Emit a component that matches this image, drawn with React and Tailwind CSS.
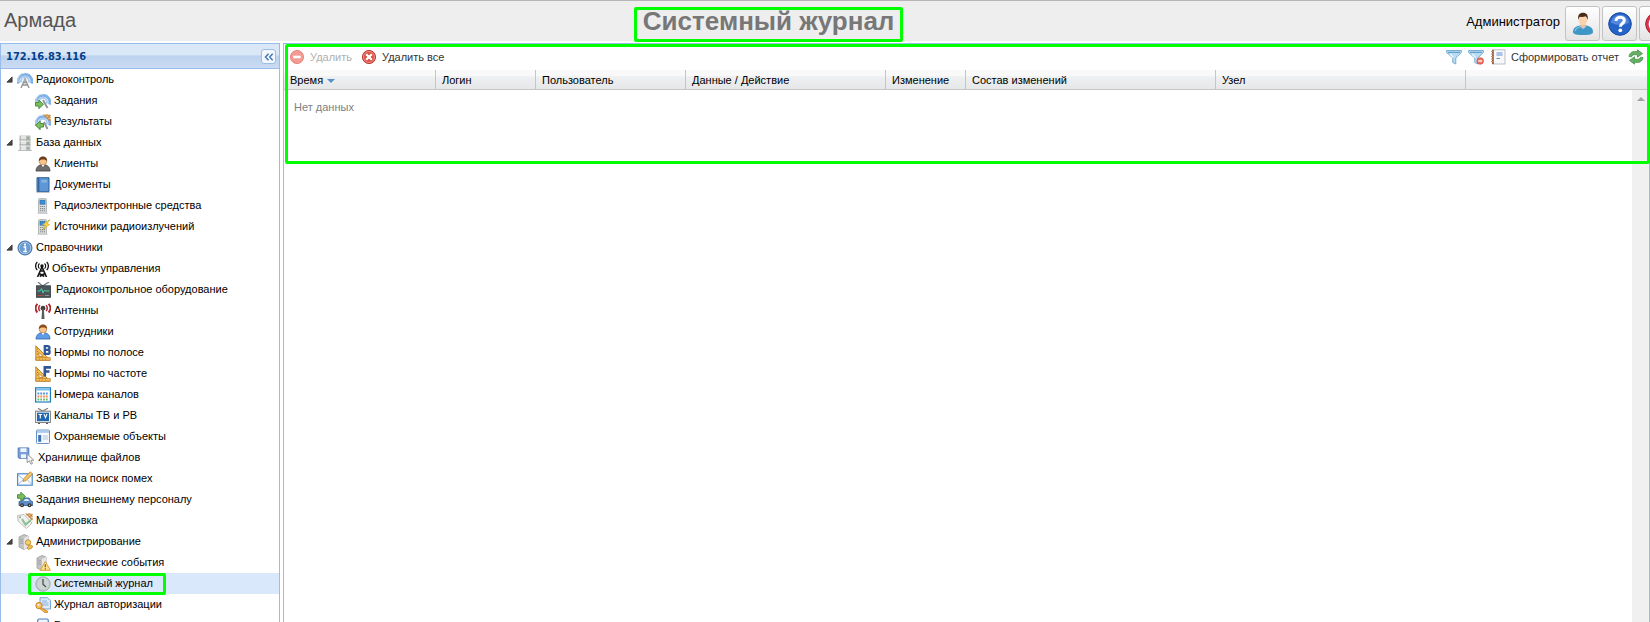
import React from "react";

const Svg = ({ children, className = "size-4" }) => (
  <svg viewBox="0 0 16 16" className={`${className} shrink-0`} aria-hidden="true">
    {children}
  </svg>
);

const Waves = () => (
  <g fill="none">
    <path d="M1.6 11.500A6.800 6.800 0 1 1 14.400 11.500" stroke="#7fb0e6" strokeWidth="2.800" />
    <path d="M4.600 10.500A3.900 3.900 0 1 1 11.400 10.500" stroke="#a9cbf0" strokeWidth="1.900" />
    <path d="M1 10A7.200 7.200 0 0 1 8 1" stroke="#cfe2f7" strokeWidth="1" />
  </g>
);

const ArrowRight = ({ y = 0, x = 0 }) => (
  <path transform={`translate(${x} ${y})`} d="M.5 9.500h3.300V7l4.700 4.300-4.700 4.400v-2.600H.5z" fill="#7dbd5c" stroke="#3f8a35" strokeWidth=".9" />
);

const Server = () => (
  <g>
    <path d="M2 3l5-2.500L11 2v11l-4 2.500L2 13z" fill="#c4c4c4" stroke="#9c9c9c" strokeWidth=".8" />
    <path d="M7 4l4-2v11l-4 2.500z" fill="#e6e6e6" />
    <path d="M3 5l3 .6M3 7l3 .6M3 9l3 .6" stroke="#999" strokeWidth=".8" />
  </g>
);

const Phone = () => (
  <g>
    <rect x="3.500" y=".6" width="8" height="14.600" rx="1" fill="#d9dbdc" stroke="#a3a8aa" strokeWidth=".8" />
    <rect x="5" y="2.200" width="5" height="4" fill="#3b8fd6" stroke="#2468a5" strokeWidth=".6" />
    <path d="M5 8.500h5M5 10.600h5M5 12.700h5" stroke="#84898c" strokeWidth="1.100" strokeDasharray="1.200 .7" />
    <path d="M2 15.500h11" stroke="#cfd1d2" strokeWidth=".8" />
  </g>
);

const SetSquare = ({ children }) => (
  <Svg>
    <path d="M.8.8v14.400h14.400z" fill="#f2bd5a" stroke="#b97a1c" strokeWidth=".9" />
    <path d="M1 12.500h14.300v2.700H1z" fill="#f2bd5a" stroke="#b97a1c" strokeWidth=".6" />
    <path d="M4 7.500v4h4z" fill="#fff" stroke="#b97a1c" strokeWidth=".8" />
    <path d="M2 4h1.200M2 6.500h1.200M2 9h1.200M4 14h.8M7 14h.8M10 14h.8" stroke="#8d5d12" strokeWidth=".7" />
    <g fill="none" stroke="#2f5796" strokeWidth="2.600">{children}</g>
  </Svg>
);

const Person = ({ hair, shirt, edge }) => (
  <Svg>
    <path d="M1 15c0-3.500 2-5.500 4.500-6h5c2.500.5 4.500 2.500 4.500 6z" fill={shirt} stroke={edge} strokeWidth=".8" />
    <circle cx="8" cy="5.400" r="3.700" fill="#f5c58c" stroke="#a96c35" strokeWidth=".6" />
    <path d="M3.900 5.500C3.500 2 5.500.4 8 .4s4.500 1.600 4.100 5.100C11.500 3.800 10 3.400 8 3.400S4.500 3.800 3.900 5.500z" fill={hair} />
    <path d="M6.500 9L8 11l1.500-2z" fill="#fff" />
  </Svg>
);

const Hatch = () => (
  <g>
    <path d="M8 .5h7.500V8z" fill="#efbd82" />
    <path d="M9 .5l6.500 6.500M12 .5l3.500 3.500M10 2.500l2-2M12 4.500l3.500-3.500M14 6.500l1.500-1.500" stroke="#a86a32" strokeWidth=".8" />
  </g>
);

const icons = {
  radio: (
    <Svg>
      <Waves />
      <path d="M4 16L8 7l4 9M5.500 13h5M6.500 10.500h3" fill="none" stroke="#8f9294" strokeWidth="1.300" />
      <circle cx="8" cy="7.500" r="1.400" fill="#aeb1b3" />
    </Svg>
  ),
  tasks: (
    <Svg>
      <Waves />
      <path d="M8 7l4.500 8" stroke="#8f9294" strokeWidth="1.800" />
      <ArrowRight />
    </Svg>
  ),
  results: (
    <Svg>
      <Waves />
      <Hatch />
      <path d="M9 8l3.500 7" stroke="#8f9294" strokeWidth="1.800" />
      <path d="M8.500 9.500H5.200V7L.5 11.300l4.700 4.400v-2.600h3.300z" fill="#7dbd5c" stroke="#3f8a35" strokeWidth=".9" />
    </Svg>
  ),
  database: (
    <Svg>
      <path d="M2.500.5h11v14.500h-11z" fill="#b9bcba" />
      <path d="M4 .5h5v14.500H4z" fill="#e4e6e4" />
      <path d="M2.500 5h11M2.500 10h11" stroke="#979b99" strokeWidth="1" />
      <path d="M2.500 6h11M2.500 11h11" stroke="#f2f3f2" strokeWidth=".8" />
      <path d="M10 2.800h2M10 8h2M10 13h2" stroke="#7ea878" strokeWidth="1.200" />
      <path d="M1 15.500h14" stroke="#b4b6b5" strokeWidth=".9" />
    </Svg>
  ),
  clients: <Person hair="#6b3a17" shirt="#6d6d6d" edge="#3f3f3f" />,
  documents: (
    <Svg>
      <path d="M2 .7h12v14H2z" fill="#5e97d3" stroke="#2c5f9c" strokeWidth="1" />
      <path d="M3.700 1v13.500" stroke="#2c5f9c" strokeWidth="1.200" />
      <path d="M6.500 3h5.500v2.500H6.500z" fill="#86b4e4" />
      <path d="M1.500 15.500h13" stroke="#b9b9b9" strokeWidth=".8" />
    </Svg>
  ),
  phone: (
    <Svg>
      <Phone />
    </Svg>
  ),
  source: (
    <Svg>
      <Phone />
      <path d="M15 .5L7.500 5.500l3 1L7.500 11 14.500 5.500l-2.500-1z" fill="#f8d84a" stroke="#c79d1b" strokeWidth=".6" />
    </Svg>
  ),
  info: (
    <Svg>
      <circle cx="8" cy="8" r="7" fill="#6c9bd2" stroke="#3a6aa5" strokeWidth="1" />
      <circle cx="8" cy="8" r="5.800" fill="none" stroke="#b4cfee" strokeWidth=".8" />
      <circle cx="8" cy="4.700" r="1.100" fill="#fff" />
      <path d="M6.500 7h2v4.200M6.300 11.500h3.600" stroke="#fff" strokeWidth="1.400" fill="none" />
    </Svg>
  ),
  tower: (
    <svg viewBox="0 0 14 16" className="h-4 w-[14px] shrink-0" aria-hidden="true">
      <g fill="none" stroke="#161616">
        <path d="M2.300 9A5.600 5.600 0 0 1 2.300 1M11.700 9a5.600 5.600 0 0 0 0-8" strokeWidth="1.300" />
        <path d="M4.500 7.500A3.200 3.200 0 0 1 4.500 2.500M9.500 7.500a3.200 3.200 0 0 0 0-5" strokeWidth="1.100" />
        <path d="M2.500 16L7 6l4.500 10M4.300 12.500l5 3M9.700 12.500l-5 3M5.500 10h3" strokeWidth="1.600" />
      </g>
      <circle cx="7" cy="5" r="1.700" fill="#161616" />
    </svg>
  ),
  equipment: (
    <Svg>
      <path d="M3 0l4.500 4L14 0" fill="none" stroke="#6c7a80" strokeWidth="1.200" />
      <rect x="1.500" y="3.800" width="14" height="11.500" fill="#4a555a" stroke="#30383b" strokeWidth=".8" />
      <path d="M2.500 9h2.500l1.500-2.500L8 11l1.500-3 1 1h4" fill="none" stroke="#4fd0a8" strokeWidth="1" />
      <path d="M3 13.500h6" stroke="#d34b3c" strokeWidth="1.200" strokeDasharray="1.300 1" />
      <path d="M10 13.500h4" stroke="#8b979c" strokeWidth="1" />
    </Svg>
  ),
  antenna: (
    <Svg>
      <g fill="none" stroke="#b2262f">
        <path d="M2.400 9.500A6.500 6.500 0 0 1 2.400.8M13.600 9.500a6.500 6.500 0 0 0 0-8.700" strokeWidth="2" />
        <path d="M5 8A3.800 3.800 0 0 1 5 2.300M11 8a3.800 3.800 0 0 0 0-5.700" strokeWidth="1.500" />
      </g>
      <circle cx="8" cy="5.200" r="2.400" fill="#414141" />
      <path d="M7.100 6h1.800l.6 10H6.500z" fill="#5b5b5b" />
    </Svg>
  ),
  staff: <Person hair="#8e4d1c" shirt="#5f9be6" edge="#2f62b0" />,
  normB: (
    <SetSquare>
      <path d="M9.800 0v10M9 1.200h3.700q1.800 0 1.800 1.800T12.700 4.900H9M12.700 4.900q1.900 0 1.900 2T12.700 8.900H9" strokeWidth="2.300" />
    </SetSquare>
  ),
  normF: (
    <SetSquare>
      <path d="M9.800 0v10.500M9 1.400h7M9 5.500h5.500" />
    </SetSquare>
  ),
  calendar: (
    <Svg>
      <rect x=".6" y=".8" width="14.800" height="14.200" fill="#fff" stroke="#1d7fbe" strokeWidth="1.200" />
      <path d="M1 2.500h14" stroke="#7cbde8" strokeWidth="2" />
      <path d="M2.500 6.500h11" stroke="#4f8fd6" strokeWidth="1.800" strokeDasharray="1.800 1" />
      <path d="M2.500 9.500h11" stroke="#ef8a4c" strokeWidth="1.800" strokeDasharray="1.800 1" />
      <path d="M2.500 12.500h11" stroke="#6dba6b" strokeWidth="1.800" strokeDasharray="1.800 1" />
    </Svg>
  ),
  tv: (
    <Svg>
      <path d="M3 .3l4.500 2.700L13 .3" fill="none" stroke="#7d7d7d" strokeWidth="1.200" />
      <rect x=".6" y="3.200" width="14.800" height="11.300" fill="#fff" stroke="#858585" strokeWidth="1.100" />
      <rect x="2" y="4.600" width="12" height="8.600" fill="#2167ae" />
      <path d="M3.500 6.500h3.600M5.300 6.500v4M9 6l1.500 3.600L12 6" fill="none" stroke="#fff" strokeWidth="1.100" />
      <path d="M3 15.500h2M11 15.500h2" stroke="#555" strokeWidth="1" />
    </Svg>
  ),
  panel: (
    <Svg>
      <rect x="1.500" y="1" width="13" height="13.500" rx="1" fill="#f5f9fd" stroke="#6a93c7" />
      <path d="M2 2.800h12" stroke="#a8c8ee" strokeWidth="2" />
      <path d="M3.200 6h3v6.800h-3z" fill="#3d72b4" />
      <path d="M7.800 6H13v5H7.800z" fill="#d4dfec" />
    </Svg>
  ),
  storage: (
    <Svg className="mb-1 size-[18px]">
      <path d="M1 .8h9.500v9.400H2L1 9.200z" fill="#7a9edb" stroke="#4d75b8" strokeWidth=".8" />
      <path d="M3 1h5.500v3.500H3zM3.500 6.500H8v3.600H3.500z" fill="#eef4fb" />
      <path d="M9 6v8l2-1.700 1.300 3 1.500-.7-1.300-2.800H15z" fill="#f5f5f5" stroke="#8f8f8f" strokeWidth=".8" />
    </Svg>
  ),
  mail: (
    <Svg>
      <rect x=".6" y="2.800" width="14.600" height="11.400" fill="#fafcff" stroke="#4f8ac9" strokeWidth="1.200" />
      <path d="M1 13.500l5.500-5M15 13.500l-5-5M1 4l7 5.500L14 5" fill="none" stroke="#9bbbe0" strokeWidth="1" />
      <path d="M6 10.500l1-3L13.200.8l2.300 2-6.300 6.700z" fill="#f7c565" stroke="#c18427" strokeWidth=".8" />
    </Svg>
  ),
  car: (
    <Svg>
      <path d="M2 13.500V9.500L5 9l2-3h5l2 3 1.800.8v3.700z" fill="#5d8cc6" stroke="#2e5991" strokeWidth=".8" />
      <path d="M6.500 9L8 7h3.300l1.200 2z" fill="#d5e6f7" />
      <circle cx="5" cy="13.300" r="2" fill="#333" />
      <circle cx="12.500" cy="13.300" r="2" fill="#333" />
      <circle cx="5" cy="13.300" r=".7" fill="#ccc" />
      <circle cx="12.500" cy="13.300" r=".7" fill="#ccc" />
      <ArrowRight y={-6.8} />
    </Svg>
  ),
  tag: (
    <Svg>
      <path d="M.5 2.500L7 1.500l8 8.500-5.500 5.500L1 8z" fill="#f1f1ef" stroke="#b5b5b2" strokeWidth=".9" />
      <Hatch />
      <path d="M5 6l3.500 5.500L14 7" fill="none" stroke="#8fc096" strokeWidth="2.200" />
      <circle cx="3" cy="4.300" r="1" fill="#9a9a98" />
    </Svg>
  ),
  admin: (
    <Svg>
      <Server />
      <circle cx="11" cy="8.500" r="2.700" fill="#f4cf72" stroke="#be8d27" strokeWidth=".9" />
      <path d="M12 10.500l3.500 1.500-.5 2-3.500 1.500-1.500-1.500 1-1z" fill="#f0bd53" stroke="#be8d27" strokeWidth=".8" />
    </Svg>
  ),
  tech: (
    <Svg>
      <Server />
      <path d="M10.300 6.500l5.200 8.800H5.200z" fill="#fce08d" stroke="#d79a2b" strokeWidth=".9" />
      <path d="M10.300 9.300v3M10.300 13.200v1.200" stroke="#7c5a17" strokeWidth="1.200" />
    </Svg>
  ),
  clock: (
    <Svg>
      <circle cx="8" cy="8" r="7.200" fill="#c3cbcb" stroke="#a3abab" strokeWidth="1" />
      <circle cx="8" cy="8" r="5.700" fill="#cdd5d5" />
      <path d="M8 3v5.200l3 2.800" fill="none" stroke="#4e5858" strokeWidth="1.400" />
    </Svg>
  ),
  auth: (
    <Svg>
      <path d="M5 .7h7.500l3 3V12H5z" fill="#dce9f8" stroke="#6d9cd2" strokeWidth=".9" />
      <path d="M7 4h5M7 6h6.500M7 8h6.500" stroke="#7fa9d9" strokeWidth=".9" />
      <circle cx="4" cy="8.600" r="3.200" fill="#f4bd62" stroke="#c5811f" strokeWidth=".9" />
      <circle cx="3.500" cy="8" r=".9" fill="#fff" />
      <path d="M6 10.500l6.500 3.500v1.500H9.500L5 11.500z" fill="#f0ad45" stroke="#c5811f" strokeWidth=".7" />
    </Svg>
  ),
  page: (
    <Svg>
      <rect x="2.700" y="1" width="10.600" height="14" rx="1.500" fill="#eef4fb" stroke="#4f7fbd" strokeWidth="1.200" />
    </Svg>
  ),
};

const tree = [
  { label: "Радиоконтроль", icon: "radio", children: [
    { label: "Задания", icon: "tasks" },
    { label: "Результаты", icon: "results" },
  ] },
  { label: "База данных", icon: "database", children: [
    { label: "Клиенты", icon: "clients" },
    { label: "Документы", icon: "documents" },
    { label: "Радиоэлектронные средства", icon: "phone" },
    { label: "Источники радиоизлучений", icon: "source" },
  ] },
  { label: "Справочники", icon: "info", children: [
    { label: "Объекты управления", icon: "tower" },
    { label: "Радиоконтрольное оборудование", icon: "equipment", gap: "gap-[5px]" },
    { label: "Антенны", icon: "antenna" },
    { label: "Сотрудники", icon: "staff" },
    { label: "Нормы по полосе", icon: "normB" },
    { label: "Нормы по частоте", icon: "normF" },
    { label: "Номера каналов", icon: "calendar" },
    { label: "Каналы ТВ и РВ", icon: "tv" },
    { label: "Охраняемые объекты", icon: "panel" },
  ] },
  { label: "Хранилище файлов", icon: "storage" },
  { label: "Заявки на поиск помех", icon: "mail" },
  { label: "Задания внешнему персоналу", icon: "car" },
  { label: "Маркировка", icon: "tag" },
  { label: "Администрирование", icon: "admin", children: [
    { label: "Технические события", icon: "tech" },
    { label: "Системный журнал", icon: "clock", selected: true },
    { label: "Журнал авторизации", icon: "auth" },
    { label: "Блокировки", icon: "page" },
  ] },
];

function TreeNode({ node, nested }) {
  return (
    <li>
      <div
        className={`relative flex h-[21px] items-center ${nested ? "pl-[34px]" : "pl-[5px]"} ${node.selected ? "bg-[#d9e8fb]" : ""}`}
      >
        {!nested && (
          <span className="flex w-[11px] shrink-0 items-center">
            {node.children && (
              <button type="button" aria-label="Свернуть" className="flex">
                <svg viewBox="0 0 8 8" className="size-[7px]" aria-hidden="true">
                  <path d="M7 1v6H1z" fill="#4a4a4a" stroke="#222" strokeWidth=".8" />
                </svg>
              </button>
            )}
          </span>
        )}
        <a href="#" className={`flex items-center whitespace-nowrap ${node.gap || "gap-[3px]"}`}>
          {icons[node.icon]}
          {node.label}
        </a>
        {node.selected && (
          <div className="pointer-events-none absolute top-0 left-[27px] h-[22px] w-[138px] rounded-xs border-3 border-[#00ff00]" />
        )}
      </div>
      {node.children && (
        <ul>
          {node.children.map((c) => (
            <TreeNode key={c.label} node={c} nested />
          ))}
        </ul>
      )}
    </li>
  );
}

const Funnel = ({ clear }) => (
  <Svg>
    <path d="M.6 1.500h14.800v2L9.800 9v6l-3-1.500V9L.6 3.500z" fill="#b9dcf2" stroke="#6fa8cf" strokeWidth=".9" />
    <path d="M2 3.300h12" stroke="#4e93c4" strokeWidth="1" />
    <path d="M4 5l3.500 3.500" stroke="#eef8fe" strokeWidth="1.200" />
    {clear && (
      <g>
        <circle cx="12.200" cy="12" r="3.300" fill="#ee7263" stroke="#cf4b3d" strokeWidth=".7" />
        <path d="M10.300 12h3.800" stroke="#fff" strokeWidth="1.300" />
      </g>
    )}
  </Svg>
);

function Toolbar() {
  return (
    <div className="flex h-[26px] shrink-0 items-center justify-between px-[5px] text-[#333]">
      <div className="flex items-center gap-[9px]">
        <button type="button" disabled className="flex items-center gap-[5px] text-[#b0b0b0]">
          <Svg>
            <circle cx="8" cy="8" r="6.600" fill="#f29b92" stroke="#e58379" strokeWidth=".9" />
            <path d="M4.300 8h7.400" stroke="#fff" strokeWidth="2.600" />
          </Svg>
          Удалить
        </button>
        <button type="button" className="flex items-center gap-[5px]">
          <Svg>
            <circle cx="8" cy="8" r="6.600" fill="#dd5146" stroke="#b4332c" strokeWidth=".9" />
            <circle cx="8" cy="8" r="5.500" fill="none" stroke="#f3a79f" strokeWidth=".7" />
            <path d="M5.200 5.200l5.600 5.600M10.800 5.200l-5.600 5.600" stroke="#fff" strokeWidth="2.200" />
          </Svg>
          Удалить все
        </button>
      </div>
      <div className="flex items-center gap-[6px]">
        <button type="button" aria-label="Фильтр"><Funnel /></button>
        <button type="button" aria-label="Сбросить фильтр"><Funnel clear /></button>
        <button type="button" className="flex items-center gap-[5px]">
          <Svg>
            <rect x="2.500" y=".8" width="12.500" height="14.200" fill="#f6f8fa" stroke="#b3b9bf" strokeWidth=".9" />
            <path d="M3 1v14" stroke="#8e4f2c" strokeWidth="1.600" />
            <path d="M1 2.500h3M1 5h3M1 7.500h3M1 10h3M1 12.500h3" stroke="#c98a64" strokeWidth="1" />
            <path d="M6.500 4h6M6.500 6h6M6.500 9.500h3.500" stroke="#5c8fd0" strokeWidth="1.100" />
          </Svg>
          Сформировать отчет
        </button>
        <button type="button" aria-label="Обновить" className="ml-[3px]">
          <Svg>
            <g fill="#66b063" stroke="#3d8741" strokeWidth=".7">
              <path d="M1 7.500C1.500 3.500 5 1.600 9.500 2.800V.8l5 3.800-5 3.600V6C6 5.200 4.500 5.700 3.500 7.800z" />
              <path d="M15 8.500c-.5 4-4 5.900-8.500 4.700v2l-5-3.800 5-3.600V10c3.500.8 5 .3 6-1.800z" />
            </g>
          </Svg>
        </button>
      </div>
    </div>
  );
}

const columns = [
  { label: "Время", width: "w-[152px]", sorted: true },
  { label: "Логин", width: "w-[100px]" },
  { label: "Пользователь", width: "w-[150px]" },
  { label: "Данные / Действие", width: "w-[200px]" },
  { label: "Изменение", width: "w-[80px]" },
  { label: "Состав изменений", width: "w-[250px]" },
  { label: "Узел", width: "w-[250px]" },
];

const headCell =
  "border-b border-[#c5c5c5] bg-linear-to-b from-[#f9f9f9] from-30% via-[#eff0f1] via-35% to-[#e6e7e9]";

function Journal() {
  return (
    <div className="relative flex-1">
      <table className="w-full table-fixed border-separate border-spacing-0">
        <thead>
          <tr className="h-5">
            {columns.map((c) => (
              <th
                key={c.label}
                scope="col"
                className={`${c.width} ${headCell} border-r pt-[2px] pb-0 pl-[6px] text-left font-normal whitespace-nowrap`}
              >
                <span className="flex items-center gap-1">
                  {c.label}
                  {c.sorted && (
                    <svg viewBox="0 0 8 4" className="h-1 w-2" aria-hidden="true">
                      <path d="M0 0h8L4 4z" fill="#5a8fce" />
                    </svg>
                  )}
                </span>
              </th>
            ))}
            <td className={`${headCell} p-0`} />
          </tr>
        </thead>
        <tbody>
          <tr>
            <td colSpan={8} className="px-[10px] py-[9px] text-[#808080]">Нет данных</td>
          </tr>
        </tbody>
      </table>
      <div className="absolute top-5 right-0 bottom-0 flex w-[17px] justify-center bg-[#f0f0f0] pt-[7px]">
        <svg viewBox="0 0 8 4" className="h-1 w-2" aria-hidden="true">
          <path d="M4 0l4 4H0z" fill="#a3a3a3" />
        </svg>
      </div>
    </div>
  );
}

const headerButton =
  "flex size-[35px] shrink-0 items-center justify-center rounded-[3px] border border-[#c3c3c3] bg-linear-to-b from-white to-[#e4e4e4]";

function Header() {
  return (
    <header className="flex h-[41px] shrink-0 items-center overflow-x-clip border-t border-[#b5b5b5] bg-[#eeeeee]">
      <div className="w-[77px] shrink-0 pb-[2px] pl-1 text-[20px] text-[#555]">Армада</div>
      <div className="-mb-px flex flex-1 justify-center self-end">
        <h1 className="flex h-[35px] items-start justify-center rounded-xs border-3 border-[#00ff00] px-[6px] text-[26px] leading-[22px] font-bold text-[#777]">
          Системный журнал
        </h1>
      </div>
      <div className="-mr-[24px] flex shrink-0 items-center gap-[2px] self-end">
        <span className="mr-[3px] pb-1 pl-[6px] text-[13px] text-black">Администратор</span>
        <button type="button" aria-label="Профиль" className={headerButton}>
          <svg viewBox="0 0 24 24" className="size-6" aria-hidden="true">
            <path d="M2 20c0-4 3-6 7-6.500h6c4 .5 7 2.500 7 6.500 0 1.500-1 3-10 3S2 21.500 2 20z" fill="#3f97c6" />
            <path d="M4 19c1-3 3-4 6-4.500l2 2 3-2" fill="none" stroke="#8ac6e4" strokeWidth="1.200" />
            <path d="M9.500 11h5v3.500L12 16.500l-2.500-2z" fill="#eebf98" />
            <ellipse cx="12" cy="7.500" rx="4.400" ry="5.500" fill="#f8d3ae" />
            <path d="M7.300 8C6.500 3 8.500.8 12 .8s5.500 2 4.700 7.200C16 5.500 15.500 4.700 14.500 4.200c-2 1-4 .8-5.500.5C8 5.300 7.600 6.300 7.300 8z" fill="#4a2a1a" />
          </svg>
        </button>
        <button type="button" aria-label="Справка" className={headerButton}>
          <svg viewBox="0 0 24 24" className="size-6" aria-hidden="true">
            <circle cx="12" cy="12" r="11.300" fill="#2563c9" stroke="#184a9e" strokeWidth="1" />
            <path d="M2.500 10.500a9.700 9.700 0 0 1 19 0q-9 5-19 0z" fill="#6fa0ec" opacity=".6" />
            <path d="M8 9c0-5 8.300-5 8.300-.5 0 3-4 3-4 6.300" fill="none" stroke="#fff" strokeWidth="3" />
            <circle cx="12.300" cy="18.300" r="1.900" fill="#fff" />
          </svg>
        </button>
        <button type="button" aria-label="Выход" className={headerButton}>
          <svg viewBox="0 0 24 24" className="size-6" aria-hidden="true">
            <circle cx="12" cy="12" r="11.300" fill="#d9364a" stroke="#a81f32" strokeWidth="1" />
            <circle cx="12" cy="12" r="7" fill="none" stroke="#fff" strokeWidth="2.800" />
            <path d="M12 4v8" stroke="#fff" strokeWidth="2.600" />
          </svg>
        </button>
      </div>
    </header>
  );
}

export default function App() {
  return (
    <div className="flex h-screen flex-col overflow-hidden bg-white font-['Liberation_Sans',Arial,sans-serif] text-[11px] text-black">
      <Header />
      <div className="mt-[2px] flex min-h-0 flex-1 gap-[3px]">
        <aside className="flex w-[280px] shrink-0 flex-col overflow-hidden border-x border-t border-[#99bce8]">
          <div className="flex h-[25px] shrink-0 items-center justify-between border-b border-[#99bce8] bg-linear-to-b from-[#dae7f6] from-45% via-[#bcd2ef] via-50% to-[#cbdcf3] pt-px pr-[3px] pl-[5px]">
            <h2 className="pt-px font-['DejaVu_Sans_Condensed','DejaVu_Sans',sans-serif] text-[11px] font-bold text-[#04408c]">
              172.16.83.116
            </h2>
            <button type="button" aria-label="Свернуть панель" className="flex size-[15px] items-center justify-center rounded-[3px] border border-[#9dbde6] bg-[#f2f7fd]">
              <svg viewBox="0 0 10 8" className="h-2 w-[10px]" aria-hidden="true">
                <path d="M4.500.8L1.500 4l3 3.200M8.700.8L5.700 4l3 3.200" fill="none" stroke="#4377b8" strokeWidth="1.500" />
              </svg>
            </button>
          </div>
          <nav>
            <ul>
              {tree.map((n) => (
                <TreeNode key={n.label} node={n} />
              ))}
            </ul>
          </nav>
        </aside>
        <main className="relative flex min-w-0 flex-1 flex-col border-x border-t border-[#99bce8]">
          <Toolbar />
          <Journal />
          <div className="pointer-events-none absolute top-0 -right-px left-px h-[120px] rounded-xs border-3 border-[#00ff00]" />
        </main>
      </div>
    </div>
  );
}
